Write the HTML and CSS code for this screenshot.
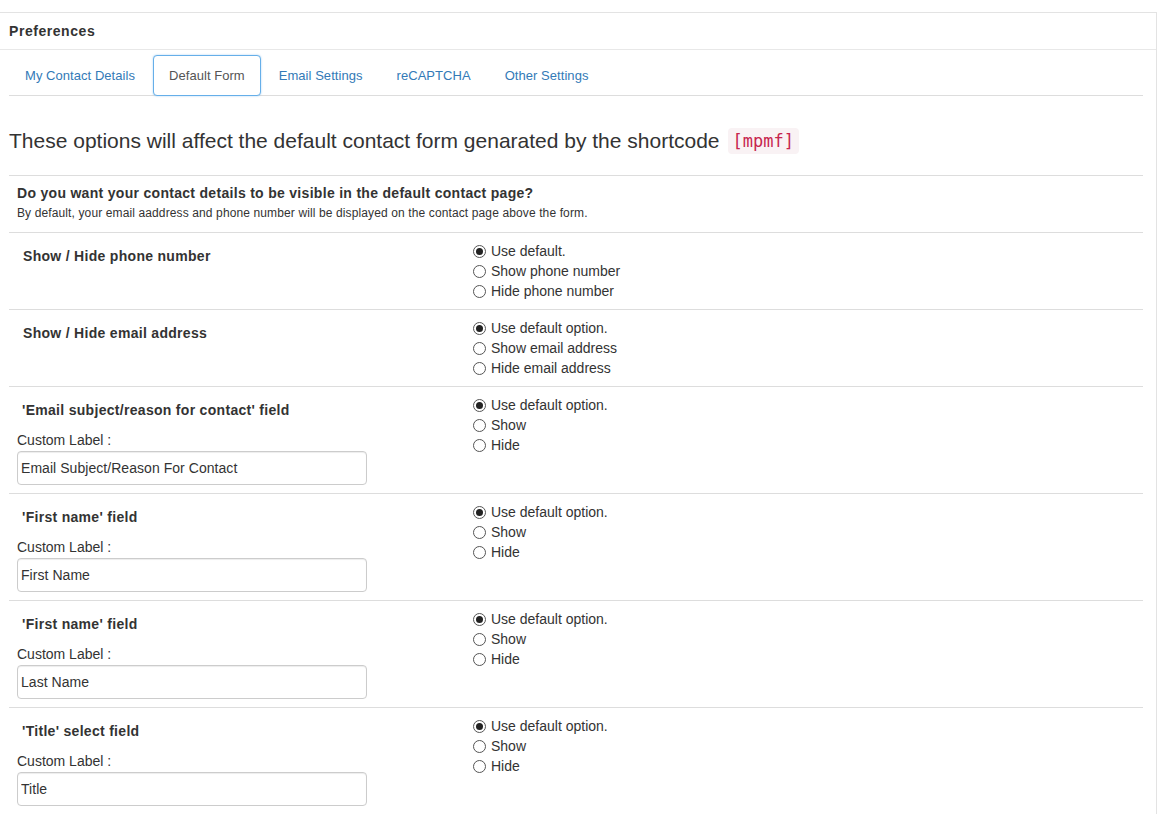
FILE: index.html
```html
<!DOCTYPE html>
<html>
<head>
<meta charset="utf-8">
<title>Preferences</title>
<link rel="stylesheet" href="styles.css">
</head>
<body>
<div class="panel">
  <div class="panel-heading">Preferences</div>
  <div class="panel-body">
    <ul class="tabs">
      <li><a class="tab">My Contact Details</a></li>
      <li><a class="tab active">Default Form</a></li>
      <li><a class="tab">Email Settings</a></li>
      <li><a class="tab">reCAPTCHA</a></li>
      <li><a class="tab">Other Settings</a></li>
    </ul>

    <h3 class="intro">These options will affect the default contact form genarated by the shortcode <code class="code">[mpmf]</code></h3>

    <div class="settings">
      <div class="row row-intro">
        <div class="intro-title">Do you want your contact details to be visible in the default contact page?</div>
        <div class="intro-note">By default, your email aaddress and phone number will be displayed on the contact page above the form.</div>
      </div>

      <div class="row">
        <div class="cell-left"><div class="field-title">Show / Hide phone number</div></div>
        <div class="cell-right">
          <label class="opt"><span class="radio checked"></span>Use default.</label>
          <label class="opt"><span class="radio"></span>Show phone number</label>
          <label class="opt"><span class="radio"></span>Hide phone number</label>
        </div>
      </div>

      <div class="row">
        <div class="cell-left"><div class="field-title">Show / Hide email address</div></div>
        <div class="cell-right">
          <label class="opt"><span class="radio checked"></span>Use default option.</label>
          <label class="opt"><span class="radio"></span>Show email address</label>
          <label class="opt"><span class="radio"></span>Hide email address</label>
        </div>
      </div>

      <div class="row">
        <div class="cell-left">
          <div class="field-title alt">'Email subject/reason for contact' field</div>
          <div class="custom-label">Custom Label :</div>
          <input class="text-input" type="text" value="Email Subject/Reason For Contact">
        </div>
        <div class="cell-right">
          <label class="opt"><span class="radio checked"></span>Use default option.</label>
          <label class="opt"><span class="radio"></span>Show</label>
          <label class="opt"><span class="radio"></span>Hide</label>
        </div>
      </div>

      <div class="row">
        <div class="cell-left">
          <div class="field-title alt">'First name' field</div>
          <div class="custom-label">Custom Label :</div>
          <input class="text-input" type="text" value="First Name">
        </div>
        <div class="cell-right">
          <label class="opt"><span class="radio checked"></span>Use default option.</label>
          <label class="opt"><span class="radio"></span>Show</label>
          <label class="opt"><span class="radio"></span>Hide</label>
        </div>
      </div>

      <div class="row">
        <div class="cell-left">
          <div class="field-title alt">'First name' field</div>
          <div class="custom-label">Custom Label :</div>
          <input class="text-input" type="text" value="Last Name">
        </div>
        <div class="cell-right">
          <label class="opt"><span class="radio checked"></span>Use default option.</label>
          <label class="opt"><span class="radio"></span>Show</label>
          <label class="opt"><span class="radio"></span>Hide</label>
        </div>
      </div>

      <div class="row">
        <div class="cell-left">
          <div class="field-title alt">'Title' select field</div>
          <div class="custom-label">Custom Label :</div>
          <input class="text-input" type="text" value="Title">
        </div>
        <div class="cell-right">
          <label class="opt"><span class="radio checked"></span>Use default option.</label>
          <label class="opt"><span class="radio"></span>Show</label>
          <label class="opt"><span class="radio"></span>Hide</label>
        </div>
      </div>
    </div>
  </div>
</div>
</body>
</html>
```

FILE: styles.css
```css
* { box-sizing: border-box; }

body {
  margin: 0;
  font-family: "Liberation Sans", Arial, sans-serif;
  color: #333;
  background: #fff;
  font-size: 14px;
}

.panel {
  margin-top: 12px;
  width: 1157px;
  min-height: 802px;
  border-top: 1px solid #e3e3e3;
  border-right: 1px solid #e3e3e3;
}

.panel-heading {
  height: 37px;
  line-height: 36px;
  padding: 0 9px;
  font-weight: bold;
  font-size: 14px;
  letter-spacing: 0.55px;
  border-bottom: 1px solid #e8e8e8;
}

.panel-body {
  padding: 5px 13px 0 9px;
}

.tabs {
  list-style: none;
  margin: 0;
  padding: 0;
  display: flex;
  border-bottom: 1px solid #ddd;
}

.tabs li {
  margin-bottom: -1px;
}

.tab {
  display: block;
  padding: 10px 15px;
  line-height: 19px;
  font-size: 13px;
  letter-spacing: 0.05px;
  color: #337ab7;
  border: 1px solid transparent;
  border-radius: 4px 4px 0 0;
  margin-right: 2px;
  text-decoration: none;
}

.tab.active {
  color: #555;
  background: #fff;
  border-color: #66afe9;
  border-radius: 4px;
  box-shadow: 0 0 2px rgba(102, 175, 233, 0.6);
}

.intro {
  margin: 32px 0 21px;
  font-size: 21px;
  line-height: 26px;
  font-weight: normal;
  display: flex;
  align-items: center;
}

.code {
  margin-left: 8px;
  font-family: "DejaVu Sans Mono", "Liberation Mono", monospace;
  font-size: 17px;
  line-height: 26px;
  padding: 0 5px;
  color: #c7254e;
  background: #f9f2f4;
  border-radius: 4px;
}

.row {
  display: grid;
  grid-template-columns: 455px 1fr;
  border-top: 1px solid #ddd;
}

.row-intro {
  display: block;
  padding: 8px 8px 11px;
}

.intro-title {
  font-weight: bold;
  font-size: 14px;
  line-height: 18px;
  letter-spacing: 0.3px;
}

.intro-note {
  margin-top: 3px;
  font-size: 12px;
  letter-spacing: 0.12px;
  line-height: 16px;
}

.cell-left {
  padding: 7px 8px 8px;
}

.cell-right {
  padding: 8px 8px 8px;
  display: flex;
  flex-direction: column;
}

.field-title {
  margin-top: 7px;
  padding-left: 6px;
  font-weight: bold;
  font-size: 14px;
  line-height: 18px;
  letter-spacing: 0.3px;
}

.field-title.alt {
  padding-left: 5px;
}

.custom-label {
  margin-top: 11px;
  line-height: 20px;
  font-size: 14px;
}

.text-input {
  display: block;
  margin-top: 1px;
  width: 350px;
  height: 34px;
  padding: 6px 3px;
  font-family: "Liberation Sans", Arial, sans-serif;
  font-size: 14px;
  letter-spacing: 0.05px;
  color: #333;
  border: 1px solid #ccc;
  border-radius: 4px;
  box-shadow: inset 0 1px 1px rgba(0, 0, 0, 0.075);
  outline: none;
}

.opt {
  display: flex;
  align-items: center;
  height: 20px;
  line-height: 20px;
  font-size: 14px;
}

.radio {
  width: 13px;
  height: 13px;
  margin-left: 1px;
  margin-right: 5px;
  border: 1px solid #555;
  border-radius: 50%;
  background: #fff;
  position: relative;
  flex: none;
}

.radio.checked::after {
  content: "";
  position: absolute;
  left: 2px;
  top: 2px;
  width: 7px;
  height: 7px;
  border-radius: 50%;
  background: #222;
}
```
